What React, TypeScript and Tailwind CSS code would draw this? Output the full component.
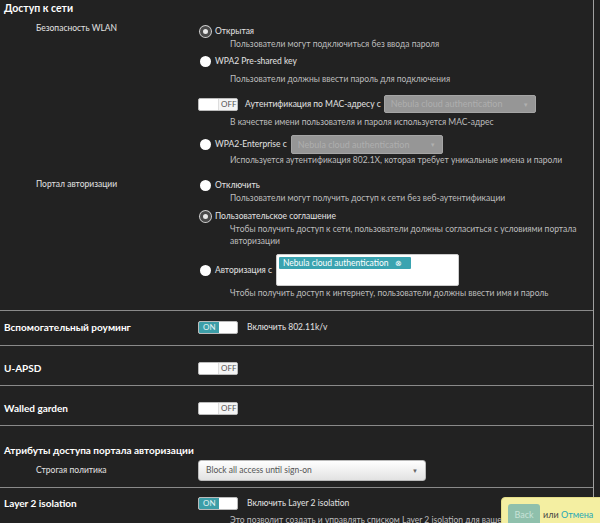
import React from "react";

const Radio = ({ on }: { on?: boolean }) =>
  on ? (
    <span className="inline-block w-[11px] h-[11px] rounded-full bg-[#e8e8e8] border-[3px] border-[#4a4a4a] ring-1 ring-[#cfcfcf] shrink-0" />
  ) : (
    <span className="inline-block w-[11px] h-[11px] rounded-full bg-white shrink-0" />
  );

const Toggle = ({ on }: { on?: boolean }) =>
  on ? (
    <span className="flex w-[40px] h-[13px] rounded-[2px] bg-white border border-[#bbb] overflow-hidden shrink-0">
      <span className="w-[20px] h-full bg-[#3d9ea8] text-[#e6f4f5] text-[8px] leading-[11px] pl-[4px]">ON</span>
    </span>
  ) : (
    <span className="flex w-[40px] h-[13px] rounded-[2px] bg-white border border-[#bbb] overflow-hidden justify-end shrink-0">
      <span className="w-[19px] h-full bg-[#f4f4f4] border-l border-[#ddd] text-[#555] text-[8px] leading-[11px] pl-[2px]">OFF</span>
    </span>
  );

const DisabledSelect = ({ w, h }: { w: string; h: string }) => (
  <span className={`flex items-center justify-between ${w} ${h} rounded-[2px] bg-[#969696] border border-[#a5a5a5] px-[6px] text-[#aeaeae] text-[9px] whitespace-nowrap`}>
    <span>Nebula cloud authentication</span>
    <span className="text-[6px] text-[#b0b0b0]">▼</span>
  </span>
);

const Desc = ({ children, cls = "pl-[32px]" }: { children: React.ReactNode; cls?: string }) => (
  <div className={`h-[12px] leading-[12px] text-[#bdbdbd] whitespace-nowrap ${cls}`}>{children}</div>
);

export default function App() {
  return (
    <div className="relative w-[600px] h-[523px] overflow-hidden bg-[#222222] text-[8.5px] text-[#e2e2e2] font-['Lato',sans-serif]">
      <div className="w-[594px] h-full border-r border-[#a0a0a0]">
        {/* Section 1 */}
        <div className="h-[311px] border-b border-[#8a8a8a]">
          <div className="pl-[4px] h-[22px] pt-[1px] leading-[14px] text-[10.5px] font-bold text-white">Доступ к сети</div>
          <div className="flex">
            <div className="w-[198px] pl-[36px] leading-[12px]">Безопасность WLAN</div>
            <div className="flex-1">
              <div className="mt-[2px] h-[14px] flex items-center pl-[2px] gap-[4px]">
                <Radio on />
                <span>Открытая</span>
              </div>
              <Desc>Пользователи могут подключиться без ввода пароля</Desc>
              <div className="mt-[4px] h-[14px] flex items-center pl-[2px] gap-[4px]">
                <Radio />
                <span>WPA2 Pre-shared key</span>
              </div>
              <Desc cls="pl-[32px] mt-[5px]">Пользователи должны ввести пароль для подключения</Desc>
              <div className="mt-[10px] h-[18px] flex items-center">
                <Toggle />
                <span className="ml-[7px] mr-[3px]">Аутентификация по MAC-адресу с</span>
                <DisabledSelect w="w-[152px]" h="h-[18px]" />
              </div>
              <Desc cls="pl-[32px] mt-[3px]">В качестве имени пользователя и пароля используется MAC-адрес</Desc>
              <div className="mt-[7px] h-[19px] flex items-center pl-[2px] gap-[4px]">
                <Radio />
                <span>WPA2-Enterprise с</span>
                <DisabledSelect w="w-[152px]" h="h-[19px]" />
              </div>
              <Desc>Используется аутентификация 802.1X, которая требует уникальные имена и пароли</Desc>
            </div>
          </div>
          <div className="flex mt-[12px]">
            <div className="w-[198px] pl-[36px] leading-[12px]">Портал авторизации</div>
            <div className="flex-1">
              <div className="h-[14px] flex items-center pl-[2px] gap-[4px]">
                <Radio />
                <span>Отключить</span>
              </div>
              <Desc>Пользователи могут получить доступ к сети без веб-аутентификации</Desc>
              <div className="mt-[5px] h-[14px] flex items-center pl-[2px] gap-[4px]">
                <Radio on />
                <span>Пользовательское соглашение</span>
              </div>
              <div className="pl-[32px] leading-[12px] text-[#bdbdbd] whitespace-nowrap">
                Чтобы получить доступ к сети, пользователи должны согласиться с условиями портала
                <br />
                авторизации
              </div>
              <div className="mt-[7px] h-[32px] flex items-center pl-[2px] gap-[4px]">
                <Radio />
                <span>Авторизация с</span>
                <div className="self-stretch w-[183px] bg-white rounded-[2px] border border-[#ccc] p-[2px]">
                  <span className="inline-flex items-center h-[12px] w-[132px] bg-[#3aa3b0] text-white text-[8.5px] px-[4px] rounded-[1px] whitespace-nowrap">
                    Nebula cloud authentication
                    <span className="ml-[7px] text-[8px]">⊗</span>
                  </span>
                </div>
              </div>
              <Desc cls="pl-[32px] mt-[1px]">Чтобы получить доступ к интернету, пользователи должны ввести имя и пароль</Desc>
            </div>
          </div>
        </div>

        {/* Roaming */}
        <div className="h-[35px] border-b border-[#8a8a8a] flex items-start pt-[10px]">
          <div className="w-[198px] pl-[4px] font-bold text-white text-[10px] leading-[13px]">Вспомогательный роуминг</div>
          <Toggle on />
          <span className="ml-[9px] leading-[13px]">Включить 802.11k/v</span>
        </div>

        {/* U-APSD */}
        <div className="h-[40px] border-b border-[#8a8a8a] flex items-start pt-[16px]">
          <div className="w-[198px] pl-[4px] font-bold text-white text-[10px] leading-[13px]">U-APSD</div>
          <Toggle />
        </div>

        {/* Walled garden */}
        <div className="h-[40px] border-b border-[#8a8a8a] flex items-start pt-[16px]">
          <div className="w-[198px] pl-[4px] font-bold text-white text-[10px] leading-[13px]">Walled garden</div>
          <Toggle />
        </div>

        {/* Attributes */}
        <div className="h-[62px] border-b border-[#8a8a8a]">
          <div className="pl-[4px] pt-[17px] h-[31px] font-bold text-white text-[10px] leading-[14px]">Атрибуты доступа портала авторизации</div>
          <div className="flex items-center mt-[3px]">
            <div className="w-[198px] pl-[36px]">Строгая политика</div>
            <div className="w-[228px] h-[21px] rounded-[3px] border border-[#bbb] bg-gradient-to-b from-white to-[#e2e2e2] flex items-center justify-between px-[7px] text-[#555]">
              <span>Block all access until sign-on</span>
              <span className="text-[6px] text-[#666]">▼</span>
            </div>
          </div>
        </div>

        {/* Layer 2 */}
        <div className="pt-[9px]">
          <div className="flex items-center h-[13px]">
            <div className="w-[198px] pl-[4px] font-bold text-white text-[10px]">Layer 2 isolation</div>
            <Toggle on />
            <span className="ml-[9px]">Включить Layer 2 isolation</span>
          </div>
          <Desc cls="pl-[230px] mt-[4px]">Это позволит создать и управлять списком Layer 2 isolation для вашей сети</Desc>
        </div>
      </div>

      {/* Floating save bar */}
      <div className="absolute left-[501px] top-[497px] w-[110px] h-[40px] bg-[#f4efa2] rounded-tl-[4px] border border-[#e4dd8a] pl-[6px] pt-[6px] flex items-start gap-[3px]">
        <span className="w-[32px] h-[22px] rounded-[3px] bg-[#8fc0ac] text-[#c9e3d8] text-[9px] flex items-center justify-center">Back</span>
        <span className="text-[9px] text-[#444] leading-[22px]">
          или <span className="text-[#27a7b5]">Отмена</span>
        </span>
      </div>
    </div>
  );
}
